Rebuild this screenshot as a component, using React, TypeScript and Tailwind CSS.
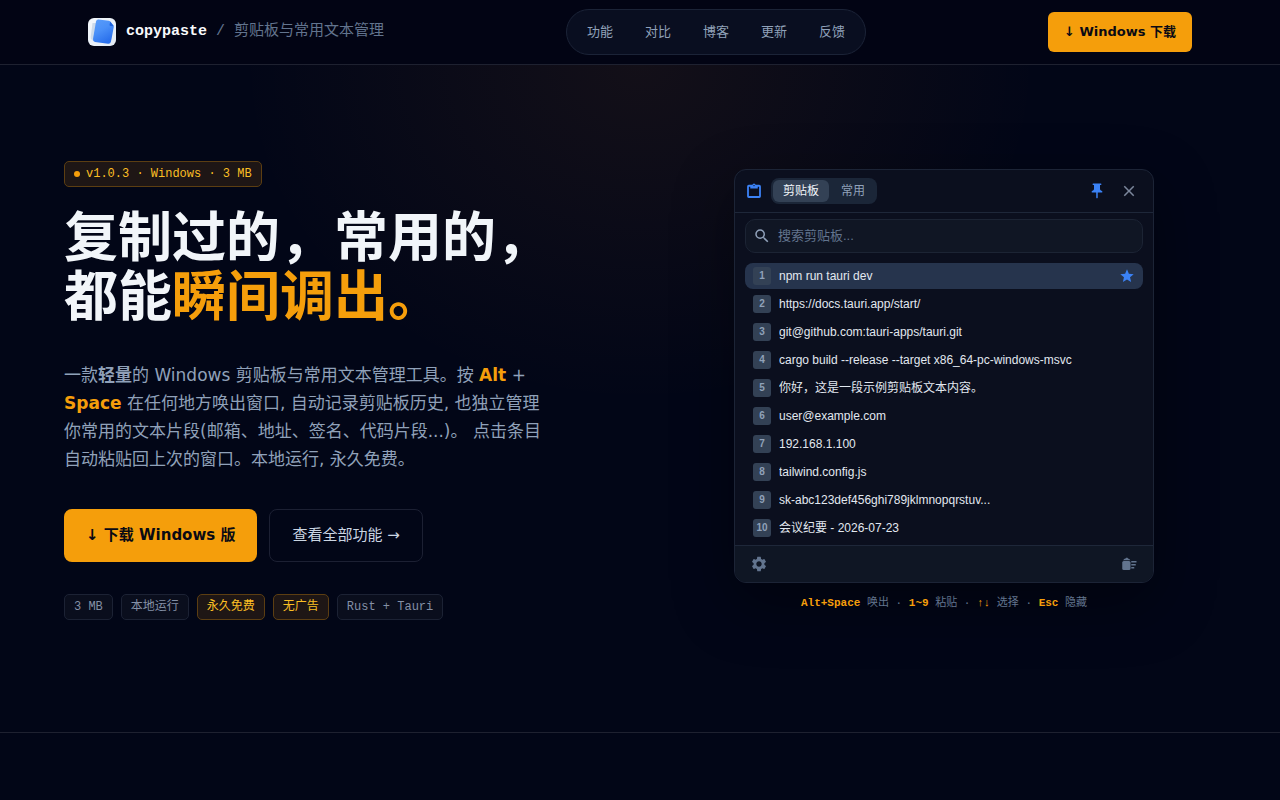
import React from "react";
import { MdClose, MdPushPin, MdSearch, MdSettings, MdStar } from "react-icons/md";

const navLinks = ["功能", "对比", "博客", "更新", "反馈"];

const tags = [
  { label: "3 MB", accent: false },
  { label: "本地运行", accent: false },
  { label: "永久免费", accent: true },
  { label: "无广告", accent: true },
  { label: "Rust + Tauri", accent: false },
];

const clips = [
  "npm run tauri dev",
  "https://docs.tauri.app/start/",
  "git@github.com:tauri-apps/tauri.git",
  "cargo build --release --target x86_64-pc-windows-msvc",
  "你好，这是一段示例剪贴板文本内容。",
  "user@example.com",
  "192.168.1.100",
  "tailwind.config.js",
  "sk-abc123def456ghi789jklmnopqrstuv...",
  "会议纪要 - 2026-07-23",
];

const Logo = () => (
  <svg viewBox="0 0 28 28" className="h-7 w-7" aria-hidden="true">
    <defs>
      <linearGradient id="logo-bg" x1="0" y1="0" x2="1" y2="1">
        <stop offset="0" stopColor="#f4f8fc" />
        <stop offset="1" stopColor="#e3ebf4" />
      </linearGradient>
      <linearGradient id="logo-sheet" x1="0" y1="0" x2="0.5" y2="1">
        <stop offset="0" stopColor="#5a9dfa" />
        <stop offset="0.5" stopColor="#4a90f8" />
        <stop offset="1" stopColor="#2a70ec" />
      </linearGradient>
    </defs>
    <rect width="28" height="28" rx="6" fill="url(#logo-bg)" />
    <path d="M4.500 5H9L6.500 23 4 22Q2.500 21 2.700 19Z" fill="#ccdaea" />
    <path
      d="M10.500 1.500 21 2.800Q22 3 22.700 3.900L25.300 7.300Q25.900 8.100 25.700 9.200L23 23.500Q22.500 26 20 25.700L7 24Q4.700 23.500 5 21L8 3.500Q8.500 1.300 10.500 1.500Z"
      fill="url(#logo-sheet)"
    />
    <path d="M22.200 3.400 25.700 8.200 22.500 8Q21.500 7.800 21.600 6.800Z" fill="#1f63dc" />
  </svg>
);

const ClipboardIcon = () => (
  <svg viewBox="0 0 24 24" className="h-[18px] w-[18px] text-[#3b82f6]" aria-hidden="true">
    <rect x="4" y="5" width="16" height="15" rx="1" fill="none" stroke="currentColor" strokeWidth="2.400" />
    <path d="M7 4h3a2 2 0 0 1 4 0h3v4.500H7Z" fill="currentColor" />
    <circle cx="12" cy="4.800" r="0.900" fill="#0a0e1c" />
  </svg>
);

const ClearIcon = () => (
  <svg viewBox="0 0 24 24" className="h-[18px] w-[18px]" fill="currentColor" aria-hidden="true">
    <path d="M15 16h4v2h-4zM15 8h7v2h-7zM15 12h6v2h-6z" />
    <path d="M5 8h7a2 2 0 0 1 2 2v8a2 2 0 0 1-2 2H5a2 2 0 0 1-2-2v-8a2 2 0 0 1 2-2Z" />
    <path d="M4 7l2-2h1l1-1.500h2L11 5h1l2 2Z" />
  </svg>
);

const Header = () => (
  <header className="border-b border-[#1e2130] bg-[#020414]">
    <div className="mx-auto flex h-16 max-w-6xl items-center justify-between px-6">
      <a
        href="#"
        className="flex items-center gap-[10px] font-['Liberation_Mono','Noto_Sans_CJK_SC',monospace] text-[15px]"
      >
        <Logo />
        <span className="whitespace-pre text-slate-500">
          <strong className="font-bold text-slate-50">copypaste</strong> / 剪贴板与常用文本管理
        </span>
      </a>

      <nav className="flex rounded-full border border-[#1b2337] bg-[#090e20] p-1">
        {navLinks.map((link) => (
          <a
            key={link}
            href="#"
            className="rounded-full px-4 py-2 text-[13px] leading-5 text-slate-400"
          >
            {link}
          </a>
        ))}
      </nav>

      <a
        href="#"
        className="flex h-10 items-center rounded-md bg-[#f59e0b] px-4 text-[13px] font-bold text-[#0a0a14]"
      >
        ↓ Windows 下载
      </a>
    </div>
  </header>
);

const Intro = () => (
  <div className="flex flex-col items-start">
    <div className="flex h-[26px] items-center gap-[6px] rounded-[5px] border border-[#5c3e12] bg-[#1e1615] px-[9px] font-['Liberation_Mono','Noto_Sans_CJK_SC',monospace] text-xs text-[#fbbf24]">
      <span className="h-[6px] w-[6px] rounded-full bg-[#f59e0b]" />
      v1.0.3 · Windows · 3 MB
    </div>

    <h1 className="mt-[22px] text-[54px] leading-[59px] font-bold text-slate-100">
      复制过的，常用的，
      <br />
      都能<span className="text-[#f59e0b]">瞬间调出。</span>
    </h1>

    <p className="mt-[34px] max-w-[480px] text-[17px] leading-7 text-slate-400">
      一款<strong className="font-bold">轻量</strong>的 Windows 剪贴板与常用文本管理工具。按{" "}
      <strong className="font-bold text-[#f59e0b]">Alt</strong> +{" "}
      <strong className="font-bold text-[#f59e0b]">Space</strong>{" "}
      在任何地方唤出窗口, 自动记录剪贴板历史, 也独立管理你常用的文本片段(邮箱、地址、签名、代码片段...)。
      点击条目自动粘贴回上次的窗口。本地运行, 永久免费。
    </p>

    <div className="mt-9 flex gap-3">
      <a
        href="#"
        className="flex h-[53px] items-center rounded-lg bg-[#f59e0b] px-[22px] text-[15px] font-bold text-[#0a0a14]"
      >
        ↓ 下载 Windows 版
      </a>
      <a
        href="#"
        className="flex h-[53px] items-center rounded-lg border border-[#1c2033] px-[22px] text-[15px] text-slate-300"
      >
        查看全部功能 →
      </a>
    </div>

    <ul className="mt-8 flex gap-2 font-['Liberation_Mono','Noto_Sans_CJK_SC',monospace] text-xs">
      {tags.map(({ label, accent }) => (
        <li
          key={label}
          className={
            accent
              ? "flex h-[26px] items-center rounded-[5px] border border-[#5c3e12] bg-[#1e1615] px-[9px] text-[#fbbf24]"
              : "flex h-[26px] items-center rounded-[5px] border border-[#1c2234] bg-[#0a0e1d] px-[9px] text-[#8490a6]"
          }
        >
          {label}
        </li>
      ))}
    </ul>
  </div>
);

const ClipboardWindow = () => (
  <div className="w-full max-w-[420px] overflow-hidden rounded-xl border border-[#1c2436] bg-[#0b0f1e] font-['Liberation_Sans','Noto_Sans_CJK_SC',sans-serif] shadow-[0_20px_60px_rgba(0,0,0,0.4)]">
    {/* Title bar */}
    <div className="flex h-[43px] items-center border-b border-[#1e2739] px-[10px]">
      <ClipboardIcon />
      <div className="ml-2 flex gap-[2px] rounded-lg bg-[#1b2638] p-[2px] text-xs">
        <button type="button" className="h-[22px] rounded-md bg-[#334155] px-[10px] text-slate-100">
          剪贴板
        </button>
        <button type="button" className="h-[22px] rounded-md px-[10px] text-slate-400">
          常用
        </button>
      </div>
      <div className="ml-auto flex gap-1">
        <button type="button" aria-label="置顶" className="flex h-7 w-7 items-center justify-center text-[#3b82f6]">
          <MdPushPin className="h-[18px] w-[18px]" />
        </button>
        <button type="button" aria-label="关闭" className="flex h-7 w-7 items-center justify-center text-[#7c879c]">
          <MdClose className="h-[18px] w-[18px]" />
        </button>
      </div>
    </div>

    {/* Search */}
    <label className="mx-[10px] mt-[6px] flex h-[34px] items-center gap-[7px] rounded-[10px] border border-[#1c2434] bg-[#101624] px-[7px]">
      <MdSearch className="h-[18px] w-[18px] text-slate-400" />
      <input
        type="text"
        aria-label="搜索剪贴板"
        placeholder="搜索剪贴板..."
        className="min-w-0 flex-1 bg-transparent text-[13px] text-slate-200 outline-none placeholder:text-slate-500"
      />
    </label>

    {/* Clip history */}
    <ol className="mx-[10px] mt-[10px] mb-1 flex flex-col gap-[2px]">
      {clips.map((clip, index) => (
        <li
          key={clip}
          className={
            index === 0
              ? "flex h-[26px] items-center gap-2 rounded-lg bg-[#26344d] px-2"
              : "flex h-[26px] items-center gap-2 rounded-lg px-2"
          }
        >
          <span className="flex h-[18px] w-[18px] shrink-0 items-center justify-center rounded-[3px] bg-[#334155] text-[10px] font-bold text-slate-400">
            {index + 1}
          </span>
          <span className="flex-1 truncate text-xs text-slate-200">{clip}</span>
          {index === 0 && <MdStar className="h-4 w-4 text-[#3b82f6]" />}
        </li>
      ))}
    </ol>

    {/* Footer */}
    <div className="flex h-[37px] items-center justify-between border-t border-[#1e2739] bg-[#0f1624] px-[10px] text-slate-500">
      <button type="button" aria-label="设置" className="flex h-7 w-7 items-center justify-center">
        <MdSettings className="h-[18px] w-[18px]" />
      </button>
      <button type="button" aria-label="清空" className="flex h-7 w-7 items-center justify-center">
        <ClearIcon />
      </button>
    </div>
  </div>
);

const App = () => {
  return (
    <div className="min-h-screen bg-[#020617] bg-[radial-gradient(ellipse_400px_340px_at_50%_64px,rgba(245,140,40,0.07),transparent)] font-['DejaVu_Sans','Noto_Sans_CJK_SC',sans-serif]">
      <Header />

      <main>
        <section className="border-b border-[#1e2130]">
          <div className="mx-auto grid max-w-6xl grid-cols-2 items-center gap-16 pt-24 pb-28">
            <Intro />
            <div className="flex flex-col items-center">
              <ClipboardWindow />
              <p className="mt-[10px] font-['Liberation_Mono','Noto_Sans_CJK_SC',monospace] text-[11px] leading-5 text-slate-500">
                <strong className="font-bold text-[#f59e0b]">Alt+Space</strong> 唤出 ·{" "}
                <strong className="font-bold text-[#f59e0b]">1~9</strong> 粘贴 ·{" "}
                <strong className="font-bold text-[#f59e0b]">↑↓</strong> 选择 ·{" "}
                <strong className="font-bold text-[#f59e0b]">Esc</strong> 隐藏
              </p>
            </div>
          </div>
        </section>
      </main>
    </div>
  );
};

export default App;
